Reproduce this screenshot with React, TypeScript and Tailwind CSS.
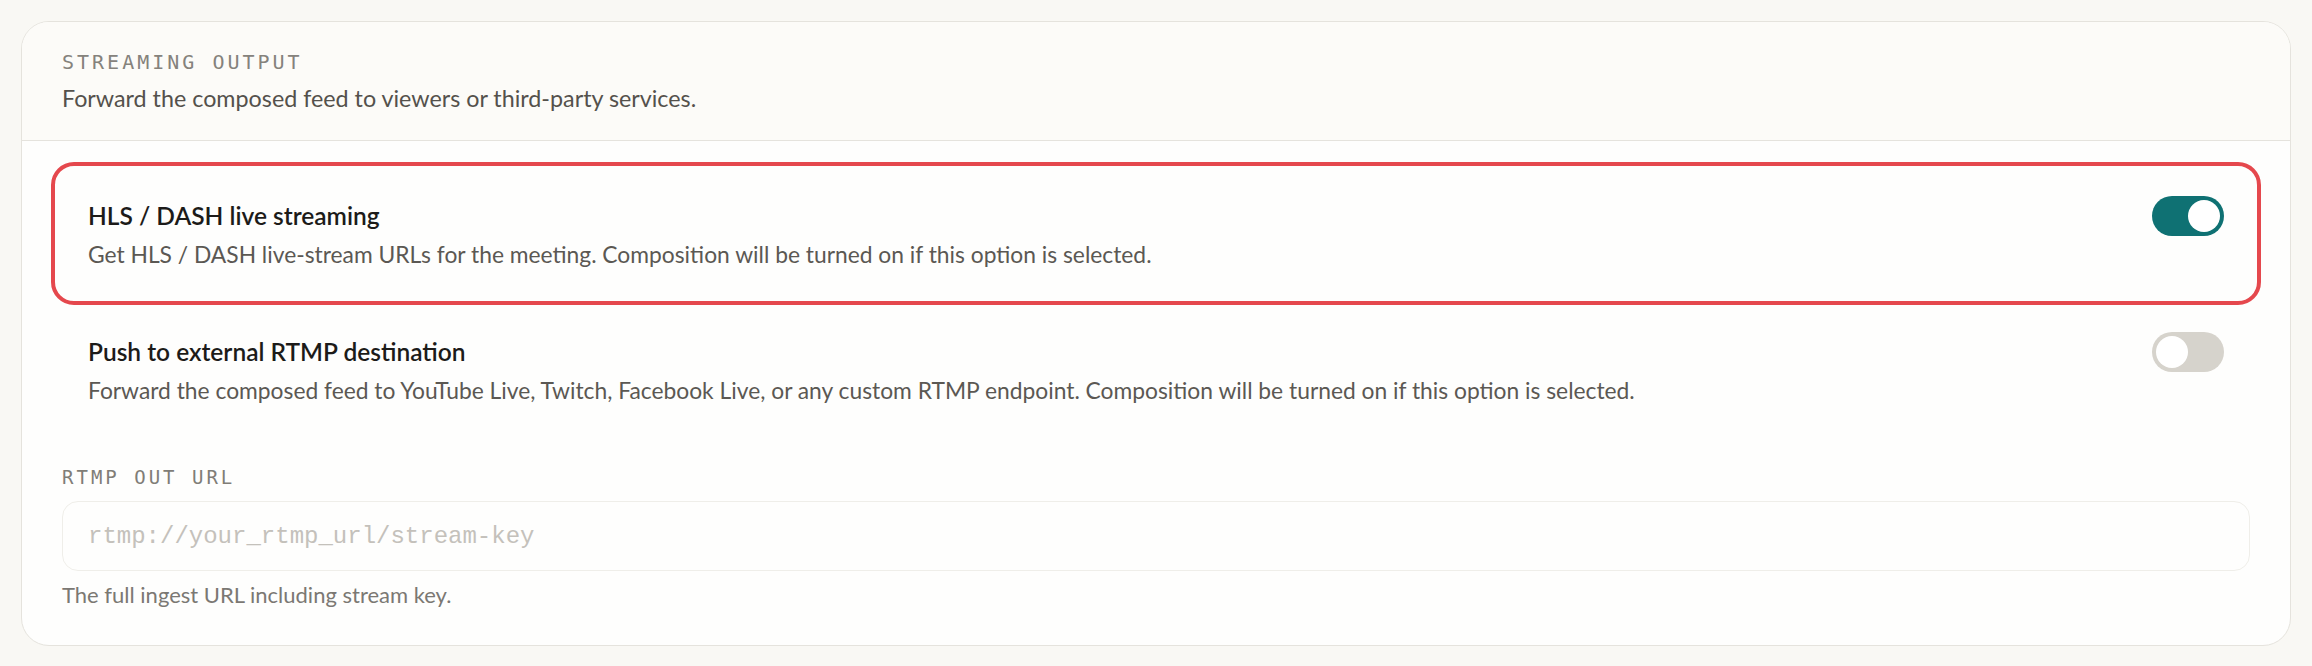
import React, { useState } from 'react';

const Toggle = ({ on, onChange }: { on: boolean; onChange: () => void }) => {
  return (
    <button
      type="button"
      onClick={onChange}
      className={`relative shrink-0 w-[72px] h-10 rounded-full flex items-center px-1 transition-colors ${
        on ? 'bg-[#0f7173] justify-end' : 'bg-[#d6d3cc] justify-start'
      }`}
    >
      <span className="block w-8 h-8 rounded-full bg-white" />
    </button>
  );
};

const OptionRow = ({
  title,
  description,
  on,
  onChange,
  highlighted,
}: {
  title: string;
  description: string;
  on: boolean;
  onChange: () => void;
  highlighted?: boolean;
}) => {
  return (
    <div
      className={`flex items-start justify-between gap-8 px-[26px] py-[23px] rounded-xl ${
        highlighted ? 'outline-4 outline-[#e5484d] outline-offset-[7px]' : ''
      }`}
    >
      <div>
        <div className="text-[24.5px] leading-10 font-semibold text-[#1c1b19]">{title}</div>
        <div className="mt-[2px] text-[22.8px] leading-[33px] text-[#5b5853]">{description}</div>
      </div>
      <Toggle on={on} onChange={onChange} />
    </div>
  );
};

export default function App() {
  const [hls, setHls] = useState(true);
  const [rtmp, setRtmp] = useState(false);

  return (
    <div className="min-h-screen bg-[#f9f8f4] px-[21px] pt-[21px] pb-5 font-['Lato',sans-serif]">
      <div className="rounded-[28px] border border-[#e5e3dd] bg-[#fefefd] overflow-hidden">
        <div className="bg-[#fcfbf8] border-b border-[#e5e3dd] px-10 pt-[25px] pb-[25px]">
          <div className="font-['DejaVu_Sans_Mono',monospace] text-[20px] leading-[30px] tracking-[3px] text-[#85827c]">
            STREAMING OUTPUT
          </div>
          <div className="mt-[5px] text-[23.3px] leading-[33px] text-[#54514c]">
            Forward the composed feed to viewers or third-party services.
          </div>
        </div>

        <div className="px-10 pt-8 pb-[34px]">
          <div className="flex flex-col gap-[15px]">
            <OptionRow
              title="HLS / DASH live streaming"
              description="Get HLS / DASH live-stream URLs for the meeting. Composition will be turned on if this option is selected."
              on={hls}
              onChange={() => setHls(!hls)}
              highlighted
            />
            <OptionRow
              title="Push to external RTMP destination"
              description="Forward the composed feed to YouTube Live, Twitch, Facebook Live, or any custom RTMP endpoint. Composition will be turned on if this option is selected."
              on={rtmp}
              onChange={() => setRtmp(!rtmp)}
            />
          </div>

          <label className="block mt-[33px] font-['DejaVu_Sans_Mono',monospace] text-[19px] leading-7 tracking-[3px] text-[#807d77]">
            RTMP OUT URL
          </label>
          <input
            type="text"
            placeholder="rtmp://your_rtmp_url/stream-key"
            className="mt-[10px] block w-full h-[70px] rounded-2xl border border-[#efeee9] bg-[#fefefd] pl-[25px] pr-6 font-['Liberation_Mono',monospace] text-[24px] leading-[36px] text-[#3a3834] placeholder:text-[#c4c1bb] outline-none"
          />
          <div className="mt-[7px] text-[22px] leading-[33px] text-[#7b7873]">
            The full ingest URL including stream key.
          </div>
        </div>
      </div>
    </div>
  );
}
